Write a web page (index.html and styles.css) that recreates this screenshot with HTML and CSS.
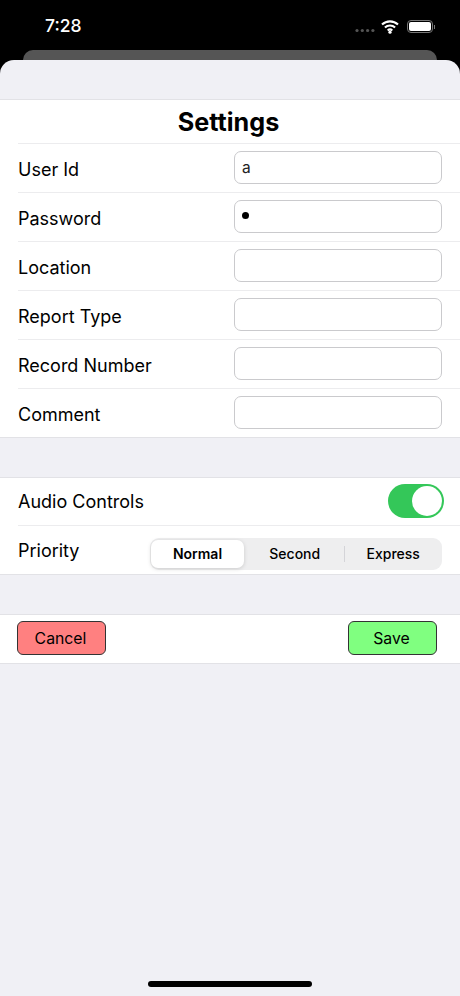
FILE: index.html
```html
<!DOCTYPE html>
<html lang="en">

<head>
  <meta charset="UTF-8" />
  <title>Settings</title>
  <link rel="stylesheet" href="styles.css">
</head>

<body>
  <div class="status-bar">
    <div class="time">7:28</div>
    <div class="status-icons">
      <svg class="signal" width="20" height="5" viewBox="0 0 20 5">
        <circle cx="2" cy="2.5" r="1.6" />
        <circle cx="7.3" cy="2.5" r="1.6" />
        <circle cx="12.6" cy="2.5" r="1.6" />
        <circle cx="17.9" cy="2.5" r="1.6" />
      </svg>
      <svg class="wifi" width="18" height="14" viewBox="0 0 18 14">
        <path d="M1 4.6 A11.5 11.5 0 0 1 17 4.6" />
        <path d="M3.9 7.6 A7.4 7.4 0 0 1 14.1 7.6" />
        <path d="M6.7 10.4 A3.4 3.4 0 0 1 11.3 10.4" />
        <circle cx="9" cy="12.2" r="1.6" class="wifi-dot" />
      </svg>
      <div class="battery">
        <div class="battery-fill"></div>
      </div>
      <div class="battery-cap"></div>
    </div>
  </div>

  <div class="back-card"></div>

  <div class="sheet">
    <div class="section first">
      <div class="title">Settings</div>
      <div class="row">
        <label>User Id</label>
        <div class="field">a</div>
      </div>
      <div class="row">
        <label>Password</label>
        <div class="field"><span class="dot"></span></div>
      </div>
      <div class="row">
        <label>Location</label>
        <div class="field"></div>
      </div>
      <div class="row">
        <label>Report Type</label>
        <div class="field"></div>
      </div>
      <div class="row">
        <label>Record Number</label>
        <div class="field"></div>
      </div>
      <div class="row">
        <label>Comment</label>
        <div class="field"></div>
      </div>
    </div>

    <div class="section second">
      <div class="row audio">
        <label>Audio Controls</label>
        <div class="toggle">
          <div class="knob"></div>
        </div>
      </div>
      <div class="row">
        <label>Priority</label>
        <div class="segments">
          <div class="segment active">Normal</div>
          <div class="segment">Second</div>
          <div class="divider"></div>
          <div class="segment">Express</div>
        </div>
      </div>
    </div>

    <div class="section actions">
      <button class="btn cancel">Cancel</button>
      <button class="btn save">Save</button>
    </div>

    <div class="home-indicator"></div>
  </div>
</body>

</html>
```

FILE: styles.css
```css
body {
  margin: 0;
  padding: 0;
  height: 996px;
  width: 460px;
  overflow: hidden;
  background-color: #000;
  font-family: "Inter", "Liberation Sans", sans-serif;
  color: #000;
}

.status-bar {
  height: 50px;
  box-sizing: border-box;
  padding: 15px 25px 0 45px;
  display: flex;
  justify-content: space-between;
  color: #fff;
}

.time {
  font-size: 17.5px;
  font-weight: 500;
  line-height: 22px;
}

.status-icons {
  display: flex;
  align-items: center;
  height: 22px;
}

.signal {
  fill: #555;
  margin-right: 6px;
  margin-top: 8px;
}

.wifi {
  margin-right: 8px;
  margin-top: 1px;
}

.wifi path {
  fill: none;
  stroke: #fff;
  stroke-width: 2.1;
}

.wifi-dot {
  fill: #fff;
}

.battery {
  width: 26px;
  height: 13px;
  margin-top: 1px;
  border: 1px solid #777;
  border-radius: 4px;
  padding: 1px;
  box-sizing: border-box;
}

.battery-fill {
  height: 100%;
  background-color: #fff;
  border-radius: 2px;
}

.battery-cap {
  width: 1px;
  height: 4px;
  margin-left: 1px;
  margin-top: 1px;
  background-color: #777;
}

.back-card {
  height: 10px;
  margin: 0 23px;
  background-color: #555;
  border-radius: 10px 10px 0 0;
}

.sheet {
  height: 936px;
  box-sizing: border-box;
  padding-top: 39px;
  background-color: #f0f0f5;
  border-radius: 14px 14px 0 0;
  position: relative;
}

.section {
  background-color: #fff;
  border-top: 1px solid #e2e2e6;
  border-bottom: 1px solid #e2e2e6;
  margin-bottom: 39px;
}

.title {
  height: 43px;
  padding-right: 3px;
  line-height: 44px;
  text-align: center;
  font-size: 25.2px;
  font-weight: 700;
}

.row {
  height: 48px;
  margin-left: 18px;
  padding-right: 18px;
  border-top: 1px solid #ececee;
  display: flex;
  align-items: center;
  justify-content: space-between;
}

.second .row:first-child {
  border-top: 0;
}

.row.audio {
  height: 47px;
}

label {
  margin-top: 2px;
  font-size: 18px;
}

.second label {
  margin-top: 0;
}

.field {
  width: 208px;
  height: 33px;
  margin-top: -2px;
  box-sizing: border-box;
  padding-left: 7px;
  border: 1.5px solid #cacacd;
  border-radius: 7px;
  font-size: 15.5px;
  color: #222;
  display: flex;
  align-items: center;
}

.dot {
  width: 7px;
  height: 7px;
  margin-top: -2px;
  background-color: #000;
  border-radius: 50%;
}

.toggle {
  width: 56px;
  height: 34px;
  margin-right: -2px;
  margin-bottom: 2px;
  box-sizing: border-box;
  padding: 2px;
  background-color: #34c759;
  border-radius: 17px;
  display: flex;
  justify-content: flex-end;
}

.knob {
  width: 30px;
  height: 30px;
  background-color: #fff;
  border-radius: 50%;
}

.segments {
  width: 292px;
  height: 32px;
  margin-top: 8px;
  box-sizing: border-box;
  padding-left: 1px;
  background-color: #eeeeef;
  border-radius: 9px;
  display: flex;
  align-items: center;
  font-size: 14px;
  font-weight: 500;
}

.segment {
  flex: 1;
  height: 28px;
  line-height: 28px;
  text-align: center;
}

.segment.active {
  flex: none;
  width: 93px;
  margin-right: 2px;
  background-color: #fff;
  border-radius: 7px;
  font-weight: 600;
  box-shadow: 0 1px 4px rgba(0, 0, 0, 0.15);
}

.divider {
  width: 1px;
  height: 16px;
  background-color: #d4d4d8;
}

.actions {
  height: 50px;
  box-sizing: border-box;
  margin-bottom: 0;
  padding: 6px 23px 0 17px;
  display: flex;
  justify-content: space-between;
  align-items: flex-start;
}

.btn {
  width: 89px;
  height: 34px;
  padding: 0 2px 0 0;
  border: 1px solid #333;
  border-radius: 6px;
  font-family: inherit;
  font-size: 15.8px;
  color: #000;
}

.cancel {
  background-color: #ff8080;
}

.save {
  background-color: #80ff80;
}

.home-indicator {
  position: absolute;
  left: 148px;
  bottom: 9px;
  width: 164px;
  height: 6px;
  background-color: #000;
  border-radius: 3px;
}
```
